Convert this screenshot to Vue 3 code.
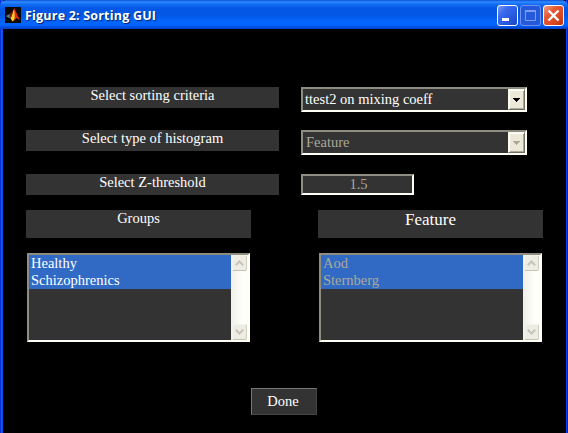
<script setup>
const rows = [
  { label: 'Select sorting criteria', kind: 'combo', value: 'ttest2 on mixing coeff', disabled: false },
  { label: 'Select type of histogram', kind: 'combo', value: 'Feature', disabled: true },
  { label: 'Select Z-threshold', kind: 'edit', value: '1.5', disabled: true },
]
const lists = [
  { title: 'Groups', items: ['Healthy', 'Schizophrenics'], disabled: false },
  { title: 'Feature', items: ['Aod', 'Sternberg'], disabled: true },
]
</script>

<template>
  <div class="window">
    <header class="titlebar">
      <svg class="logo" width="16" height="16" viewBox="0 0 16 16">
        <rect width="16" height="16" fill="#080808" />
        <path d="M0.8 9 L4.5 7.2 L6.8 6.5 L5 11.2 L3.5 10.8 Z" fill="#4a7f86" />
        <path d="M4.5 7.4 L7 5 L9 2 L7.5 8 L5 11.2 Z" fill="#7a2412" />
        <path d="M9 1.2 C11 3 12 8 15.2 13.2 L11.5 11 L8 14.8 L6 11 C7.5 9 8 4 9 1.2Z" fill="#e62a10" />
        <path d="M8.8 2.5 L9.6 6 L9.6 11.5 L7.6 14.6 L5.5 11.4 C7.5 9 8 5 8.8 2.5Z" fill="#f8d42c" />
      </svg>
      <h1 class="caption">Figure 2: Sorting GUI</h1>
      <div class="controls">
        <span class="ctl">
          <svg width="21" height="21" viewBox="0 0 21 21"><rect x="5" y="13" width="7" height="3" fill="#fff" /></svg>
        </span>
        <span class="ctl dim">
          <svg width="21" height="21" viewBox="0 0 21 21">
            <path d="M5.5 6 H15.5 V15.5 H5.5 Z" fill="none" stroke="#7d9cf0" />
            <rect x="5" y="5" width="11" height="2" fill="#7d9cf0" />
          </svg>
        </span>
        <span class="ctl close">
          <svg width="21" height="21" viewBox="0 0 21 21">
            <path d="M5.5 5.5 L15.5 15.5 M15.5 5.5 L5.5 15.5" stroke="#fff" stroke-width="2.4" />
          </svg>
        </span>
      </div>
    </header>

    <main class="client">
      <div class="form">
        <div v-for="row in rows" :key="row.label" class="row">
          <div class="label">{{ row.label }}</div>
          <div v-if="row.kind === 'combo'" class="combo sunken" :class="{ disabled: row.disabled }">
            <span class="value">{{ row.value }}</span>
            <span class="drop">
              <svg width="7" height="4" viewBox="0 0 7 4" shape-rendering="crispEdges">
                <path d="M0 0 H7 V1 H6 V2 H5 V3 H4 V4 H3 V3 H2 V2 H1 V1 H0 Z" fill="currentColor" />
              </svg>
            </span>
          </div>
          <div v-else class="edit sunken disabled">{{ row.value }}</div>
        </div>
      </div>

      <div class="lists">
        <section v-for="list in lists" :key="list.title" class="group" :class="{ disabled: list.disabled }">
          <div class="heading">{{ list.title }}</div>
          <div class="listbox sunken">
            <div class="items">
              <div v-for="item in list.items" :key="item" class="item">{{ item }}</div>
            </div>
            <div class="scroll">
              <span class="arrow">
                <svg width="9" height="6" viewBox="0 0 9 6"><path d="M0.8 5.2 L4.5 1.5 L8.2 5.2" /></svg>
              </span>
              <span class="arrow">
                <svg width="9" height="6" viewBox="0 0 9 6"><path d="M0.8 0.8 L4.5 4.5 L8.2 0.8" /></svg>
              </span>
            </div>
          </div>
        </section>
      </div>

      <div class="done">Done</div>
    </main>
  </div>
</template>

<style>
body {
  margin: 0;
  background: #000;
  overflow: hidden;
}
</style>

<style scoped>
.window {
  box-sizing: border-box;
  width: 568px;
  height: 433px;
  display: flex;
  flex-direction: column;
  background: linear-gradient(90deg, #0831d9 0 1px, #0b5bf0 1px 2px, #0a50e4 2px 3px, #000 3px 566px, #0a3ff0 566px 567px, #0420b8 567px);
  font-family: "Liberation Serif", serif;
  font-size: 14.5px;
  color: #fff;
}
.titlebar {
  box-sizing: border-box;
  height: 29px;
  flex: none;
  display: flex;
  align-items: flex-start;
  padding: 5px 4px 0 5px;
  border-radius: 6px 6px 0 0;
  background: linear-gradient(180deg, #0a50d8 0, #2f8bff 2px, #1470f5 4px, #0458e6 8px, #0457e4 15px, #0364fa 21px, #0366ff 25px, #0250e0 27px, #0340c4 29px);
}
.logo {
  margin-top: 2px;
}
.caption {
  margin: 2px 0 0 4px;
  font: bold 12.5px/18px "Trebuchet MS", "Open Sans", sans-serif;
  letter-spacing: 0.2px;
  white-space: nowrap;
  text-shadow: 1px 1px 1px #0a246a;
}
.controls {
  display: flex;
  gap: 2px;
  margin-left: auto;
}
.ctl {
  box-sizing: border-box;
  width: 21px;
  height: 21px;
  border: 1px solid #fff;
  border-radius: 3px;
  background: linear-gradient(135deg, #7a9cf5 0, #3a6aee 30%, #2556dc 70%, #1c48c8 100%);
}
.ctl svg {
  display: block;
  margin: -1px;
}
.ctl.dim {
  border-color: #6f92ee;
  background: #2459dc;
}
.ctl.close {
  background: linear-gradient(135deg, #f0a080 0, #e55a35 35%, #d8441c 75%, #b83410 100%);
}
.client {
  display: flex;
  flex-direction: column;
  padding: 58px 25px 0 26px;
}
.form {
  display: grid;
  grid-template-rows: 43px 44px 36px;
}
.row {
  display: flex;
  align-items: flex-start;
  gap: 22px;
}
.label {
  width: 253px;
  height: 21px;
  background: #333;
  text-align: center;
  line-height: 16px;
}
.sunken {
  box-sizing: border-box;
  border: 2px solid;
  border-color: #aca899 #fffff6 #fffff6 #aca899;
  background: #333;
}
.sunken {
  border-top-color: #8f8c80;
  border-left-color: #8f8c80;
}
.combo {
  width: 226px;
  height: 25px;
  display: flex;
  justify-content: space-between;
}
.combo .value {
  padding-left: 2px;
  line-height: 21px;
}
.combo.disabled .value {
  padding-left: 3px;
}
.drop {
  box-sizing: border-box;
  width: 17px;
  height: 21px;
  display: flex;
  align-items: center;
  justify-content: center;
  color: #000;
  background: #ece9d8;
  border: 1px solid;
  border-color: #f8f7ee #716f64 #716f64 #f8f7ee;
  box-shadow: inset 1px 1px 0 #fff, inset -1px -1px 0 #aca899;
}
.disabled {
  color: #aca899;
}
.disabled .drop {
  color: #aca899;
}
.edit {
  width: 113px;
  height: 21px;
  text-align: center;
  line-height: 17px;
  padding-left: 2px;
}
.lists {
  display: flex;
  gap: 67px;
}
.group {
  width: 225px;
}
.heading {
  height: 28px;
  margin-bottom: 15px;
  background: #333;
  color: #fff;
  text-align: center;
  line-height: 16px;
}
.disabled .heading {
  font-size: 17px;
  line-height: 19px;
}
.listbox {
  width: 223px;
  height: 89px;
  margin-left: 1px;
  display: flex;
}
.items {
  flex: 1;
}
.item {
  height: 17px;
  padding-left: 2px;
  background: #316ac5;
  line-height: 17px;
}
.scroll {
  width: 17px;
  display: flex;
  flex-direction: column;
  justify-content: space-between;
  background: linear-gradient(90deg, #f0efe8, #fefefb 70%);
}
.arrow {
  box-sizing: border-box;
  width: 15px;
  height: 16px;
  margin: 0 1px;
  display: flex;
  align-items: center;
  justify-content: center;
  border: 1px solid;
  border-color: #f4f3ea #d0cec0 #c4c2b4 #f4f3ea;
  border-radius: 2px;
  background: #eeede5;
}
.arrow path {
  fill: none;
  stroke: #c6c4b8;
  stroke-width: 2;
}
.done {
  box-sizing: border-box;
  width: 66px;
  height: 27px;
  margin: 46px 0 0 225px;
  padding-right: 2px;
  border: 1px solid;
  border-color: #777 #444 #444 #777;
  background: #333;
  text-align: center;
  line-height: 25px;
}
</style>
